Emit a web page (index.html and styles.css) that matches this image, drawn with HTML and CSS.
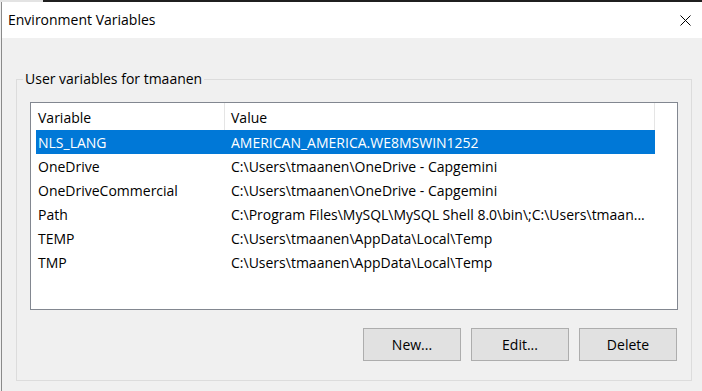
FILE: index.html
```html
<!DOCTYPE html>
<html>
<head>
<meta charset="utf-8">
<title>Environment Variables</title>
<link rel="stylesheet" href="styles.css">
</head>
<body>
<div class="topstrip"><span class="ts-left"></span><span class="ts-right"></span></div>
<div class="window">
  <div class="titlebar">
    <span class="title">Environment Variables</span>
    <span class="close"><svg width="11" height="11" viewBox="0 0 11 11"><path d="M0.5 0.5 L10.5 10.5 M10.5 0.5 L0.5 10.5" stroke="#000" stroke-width="1" fill="none"/></svg></span>
  </div>
  <div class="client">
    <fieldset class="group">
      <legend>User variables for tmaanen</legend>
      <div class="list">
        <div class="lv-header">
          <div class="h-var">Variable</div>
          <div class="h-val">Value</div>
        </div>
        <div class="row selected"><div class="c-var">NLS_LANG</div><div class="c-val">AMERICAN_AMERICA.WE8MSWIN1252</div></div>
        <div class="row"><div class="c-var">OneDrive</div><div class="c-val">C:\Users\tmaanen\OneDrive - Capgemini</div></div>
        <div class="row"><div class="c-var">OneDriveCommercial</div><div class="c-val">C:\Users\tmaanen\OneDrive - Capgemini</div></div>
        <div class="row"><div class="c-var">Path</div><div class="c-val">C:\Program Files\MySQL\MySQL Shell 8.0\bin\;C:\Users\tmaan...</div></div>
        <div class="row"><div class="c-var">TEMP</div><div class="c-val">C:\Users\tmaanen\AppData\Local\Temp</div></div>
        <div class="row"><div class="c-var">TMP</div><div class="c-val">C:\Users\tmaanen\AppData\Local\Temp</div></div>
      </div>
      <div class="buttons">
        <button class="btn">New...</button>
        <button class="btn">Edit...</button>
        <button class="btn">Delete</button>
      </div>
    </fieldset>
  </div>
</div>
</body>
</html>
```
FILE: styles.css
```css
html, body {
  margin: 0;
  padding: 0;
}
body {
  width: 702px;
  height: 391px;
  overflow: hidden;
  background: #f0f0f0;
  font-family: "Open Sans", "Noto Sans", sans-serif;
  font-size: 14px;
  color: #000;
}
.topstrip {
  display: flex;
  height: 2px;
}
.ts-left {
  width: 43px;
  background: #e3e3e3;
}
.ts-right {
  flex: 1;
  background: #1f1f1f;
}
.window {
  margin-left: 1px;
  border-left: 1px solid #8a8a8a;
  height: 389px;
  display: flex;
  flex-direction: column;
}
.titlebar {
  height: 36px;
  background: #fff;
  display: flex;
  align-items: center;
  justify-content: space-between;
  padding-left: 6px;
}
.title {
  line-height: 20px;
}
.close {
  width: 34px;
  display: flex;
  justify-content: center;
  align-items: center;
}
.close svg {
  display: block;
}
.client {
  flex: 1;
  padding: 31px 10px 10px 14px;
}
.group {
  margin: 0;
  border: 1px solid #dcdcdc;
  padding: 13px 13px 19px 13px;
  min-width: 0;
}
.group legend {
  padding: 0 2px;
  margin-left: -7px;
  line-height: 20px;
}
.list {
  height: 206px;
  border: 1px solid #828790;
  background: #fff;
  overflow: hidden;
}
.lv-header {
  display: flex;
  height: 27px;
}
.h-var, .h-val {
  box-sizing: border-box;
  padding-top: 3px;
  line-height: 24px;
  border-right: 1px solid #e5e5e5;
}
.h-var {
  width: 194px;
  padding-left: 7px;
}
.h-val {
  width: 430px;
  padding-left: 6px;
}
.row {
  display: flex;
  margin-left: 5px;
  width: 619px;
  height: 24px;
  line-height: 25px;
  white-space: nowrap;
}
.row.selected {
  background: #0078d7;
  color: #fff;
}
.c-var {
  width: 188px;
  padding-left: 2px;
  box-sizing: border-box;
}
.c-val {
  padding-left: 7px;
}
.buttons {
  display: flex;
  justify-content: flex-end;
  gap: 10px;
  margin-top: 18px;
  padding-right: 1px;
}
.btn {
  width: 98px;
  height: 33px;
  margin: 0;
  padding: 0;
  background: #e1e1e1;
  border: 1px solid #adadad;
  border-radius: 0;
  font: inherit;
  color: #000;
}
```
